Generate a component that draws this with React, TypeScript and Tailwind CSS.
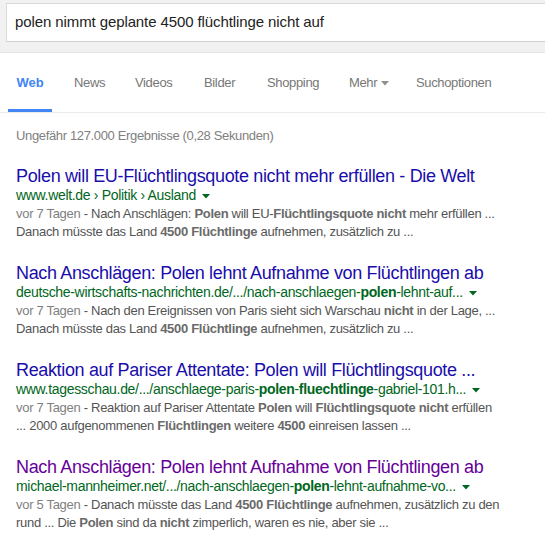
import React from "react";

const Arrow = ({ color }: { color: string }) => (
  <svg width="8" height="5" viewBox="0 0 8 5" className="inline-block ml-[6px] align-middle">
    <path d="M0 0 L8 0 L4 4.5 Z" fill={color} />
  </svg>
);

type Part = string | { b: string };

const Rich = ({ parts, bold }: { parts: Part[]; bold: string }) => (
  <>
    {parts.map((p, i) =>
      typeof p === "string" ? (
        <span key={i}>{p}</span>
      ) : (
        <b key={i} className={`font-bold ${bold}`}>
          {p.b}
        </b>
      )
    )}
  </>
);

const results: {
  title: string;
  visited?: boolean;
  url: Part[];
  line1: Part[];
  line2: Part[];
}[] = [
  {
    title: "Polen will EU-Flüchtlingsquote nicht mehr erfüllen - Die Welt",
    url: ["www.welt.de › Politik › Ausland"],
    line1: [
      "vor 7 Tagen - Nach Anschlägen: ",
      { b: "Polen" },
      " will EU-",
      { b: "Flüchtlingsquote nicht" },
      " mehr erfüllen ...",
    ],
    line2: ["Danach müsste das Land ", { b: "4500 Flüchtlinge" }, " aufnehmen, zusätzlich zu ..."],
  },
  {
    title: "Nach Anschlägen: Polen lehnt Aufnahme von Flüchtlingen ab",
    url: ["deutsche-wirtschafts-nachrichten.de/.../nach-anschlaegen-", { b: "polen" }, "-lehnt-auf..."],
    line1: [
      "vor 7 Tagen - Nach den Ereignissen von Paris sieht sich Warschau ",
      { b: "nicht" },
      " in der Lage, ...",
    ],
    line2: ["Danach müsste das Land ", { b: "4500 Flüchtlinge" }, " aufnehmen, zusätzlich zu ..."],
  },
  {
    title: "Reaktion auf Pariser Attentate: Polen will Flüchtlingsquote ...",
    url: [
      "www.tagesschau.de/.../anschlaege-paris-",
      { b: "polen" },
      "-",
      { b: "fluechtlinge" },
      "-gabriel-101.h...",
    ],
    line1: [
      "vor 7 Tagen - Reaktion auf Pariser Attentate ",
      { b: "Polen" },
      " will ",
      { b: "Flüchtlingsquote nicht" },
      " erfüllen",
    ],
    line2: ["... 2000 aufgenommenen ", { b: "Flüchtlingen" }, " weitere ", { b: "4500" }, " einreisen lassen ..."],
  },
  {
    title: "Nach Anschlägen: Polen lehnt Aufnahme von Flüchtlingen ab",
    visited: true,
    url: ["michael-mannheimer.net/.../nach-anschlaegen-", { b: "polen" }, "-lehnt-aufnahme-vo..."],
    line1: [
      "vor 5 Tagen - Danach müsste das Land ",
      { b: "4500 Flüchtlinge" },
      " aufnehmen, zusätzlich zu den",
    ],
    line2: ["rund ... Die ", { b: "Polen" }, " sind da ", { b: "nicht" }, " zimperlich, waren es nie, aber sie ..."],
  },
];

export default function App() {
  return (
    <div
      className="w-[545px] h-[550px] bg-white overflow-hidden"
      style={{ fontFamily: '"Liberation Sans", Arial, sans-serif' }}
    >
      {/* search area */}
      <div className="h-[53px] bg-[#f1f1f1] border-b border-[#e5e5e5] pt-[3px] pl-[6px]">
        <div className="h-[39px] w-[560px] bg-white border border-[#d9d9d9] border-b-[#cfcfcf] flex items-center pl-[8px] text-[15px] tracking-[-0.1px] text-[#222]">
          polen nimmt geplante 4500 flüchtlinge nicht auf
        </div>
      </div>

      {/* tabs */}
      <div className="h-[60px] border-b border-[#ebebeb] pl-[8px] flex items-end text-[13px] tracking-[-0.35px] text-[#777]">
        <div className="flex items-end">
          <div className="w-[44px] h-[58px] flex items-center flex-col justify-between">
            <div className="h-[55px] flex items-center pt-[2px] font-bold text-[#4285f4] tracking-[0px]">Web</div>
            <div className="h-[3px] w-[44px] bg-[#4285f4]" />
          </div>
          <div className="h-[58px] w-[61px] ml-[22px] flex items-center pb-[1px]">News</div>
          <div className="h-[58px] w-[69px] flex items-center pb-[1px]">Videos</div>
          <div className="h-[58px] w-[63px] flex items-center pb-[1px]">Bilder</div>
          <div className="h-[58px] w-[82px] flex items-center pb-[1px]">Shopping</div>
          <div className="h-[58px] w-[67px] flex items-center pb-[1px]">
            Mehr
            <svg width="8" height="5" viewBox="0 0 8 5" className="ml-[4px] mt-[1px]">
              <path d="M0 0 L8 0 L4 4.5 Z" fill="#909090" />
            </svg>
          </div>
          <div className="h-[58px] flex items-center pb-[1px]">Suchoptionen</div>
        </div>
      </div>

      {/* stats */}
      <div className="pl-[16px] pt-[15px] text-[13px] leading-[16px] tracking-[-0.35px] text-[#808080]">
        Ungefähr 127.000 Ergebnisse (0,28 Sekunden)
      </div>

      <div className="pl-[16px] pt-[21px] flex flex-col gap-[21px]">
        {results.map((r, i) => (
          <div key={i} className="whitespace-nowrap">
            <div
              className={`text-[18px] leading-[22px] tracking-[-0.35px] ${
                r.visited ? "text-[#660099]" : "text-[#1a0dab]"
              }`}
            >
              {r.title}
            </div>
            <div className="text-[14px] leading-[16px] tracking-[-0.32px] text-[#006621]">
              <Rich parts={r.url} bold="text-[#006621]" />
              <Arrow color="#006621" />
            </div>
            <div className="mt-[2px] text-[13px] leading-[18px] tracking-[-0.3px] text-[#545454]">
              <div>
                <span className="text-[#808080]">{(r.line1[0] as string).slice(0, 11)}</span>
                <Rich parts={[(r.line1[0] as string).slice(11), ...r.line1.slice(1)]} bold="text-[#6a6a6a]" />
              </div>
              <div>
                <Rich parts={r.line2} bold="text-[#6a6a6a]" />
              </div>
            </div>
          </div>
        ))}
      </div>
    </div>
  );
}
